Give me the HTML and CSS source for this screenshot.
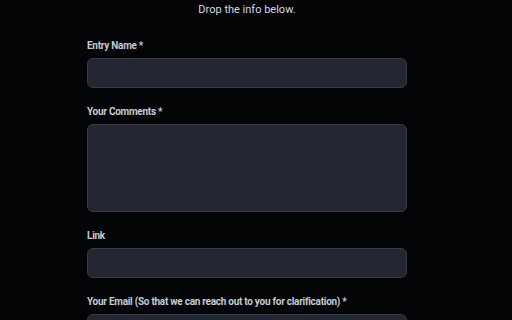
FILE: index.html
```html
<!DOCTYPE html>
<html lang="en">
<head>
<meta charset="utf-8">
<title>Form</title>
<link rel="stylesheet" href="styles.css">
</head>
<body>
<main class="page">
  <p class="intro">Drop the info below.</p>
  <form class="form">
    <div class="field">
      <label class="label" for="name">Entry Name *</label>
      <input class="input" id="name" type="text">
    </div>
    <div class="field">
      <label class="label" for="comments">Your Comments *</label>
      <textarea class="input textarea" id="comments"></textarea>
    </div>
    <div class="field">
      <label class="label" for="link">Link</label>
      <input class="input" id="link" type="text">
    </div>
    <div class="field">
      <label class="label" for="email">Your Email (So that we can reach out to you for clarification) *</label>
      <input class="input" id="email" type="email">
    </div>
  </form>
</main>
</body>
</html>
```

FILE: styles.css
```css
html, body {
  margin: 0;
  padding: 0;
  background: #030405;
  overflow: hidden;
}
body {
  font-family: Roboto, "Liberation Sans", sans-serif;
  color: #c9d1d9;
}
.page {
  width: 320px;
  margin-left: 87px;
}
.intro {
  margin: 0 0 18px;
  padding-top: 1px;
  height: 17px;
  font-size: 11px;
  line-height: 17px;
  text-align: center;
  color: #d6dbe0;
}
.form {
  display: flex;
  flex-direction: column;
  gap: 14px;
}
.field {
  display: flex;
  flex-direction: column;
  gap: 3px;
}
.label {
  font-size: 10px;
  font-weight: 700;
  line-height: 19px;
  letter-spacing: -0.27px;
  color: #c5ccd4;
}
.input {
  box-sizing: border-box;
  width: 320px;
  height: 30px;
  margin: 0;
  padding: 0 8px;
  background: #212631;
  border: 1px solid #353b45;
  border-radius: 6px;
  color: #c9d1d9;
  font: inherit;
  resize: none;
}
.textarea {
  height: 88px;
}
```
